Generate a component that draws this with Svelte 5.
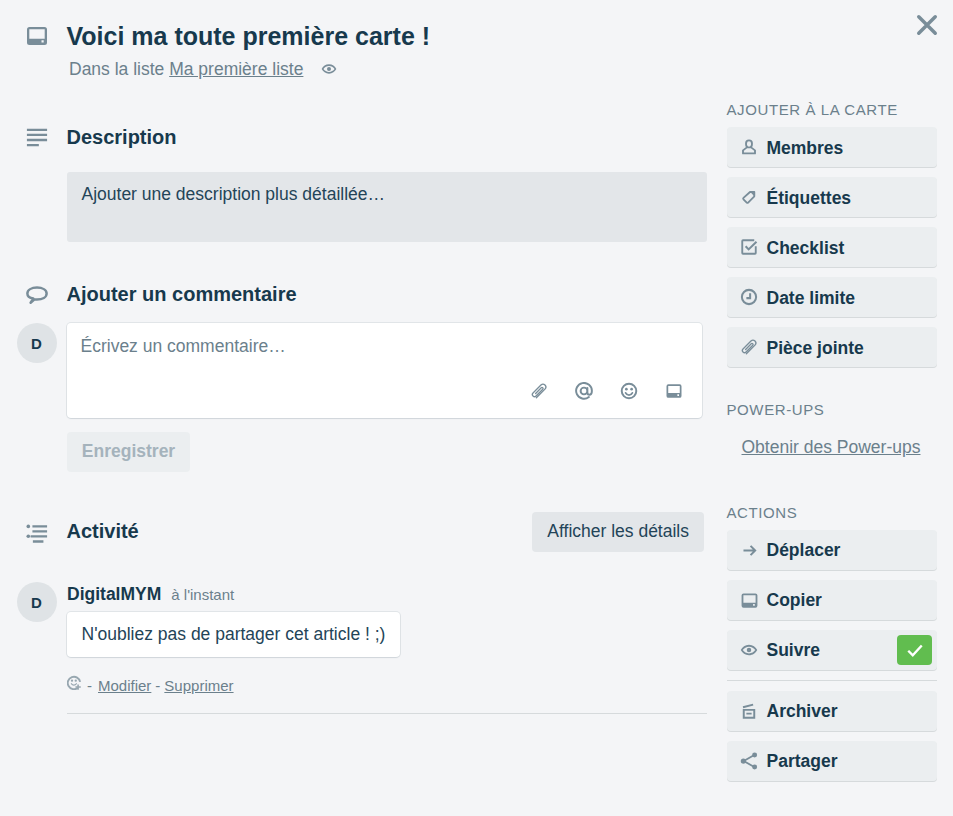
<script>
  const addItems = [
    { icon: 'person', label: 'Membres' },
    { icon: 'tag', label: 'Étiquettes', size: 16 },
    { icon: 'check', label: 'Checklist' },
    { icon: 'clock', label: 'Date limite' },
    { icon: 'clip', label: 'Pièce jointe' }
  ];
  const actionsA = [
    { icon: 'arrow', label: 'Déplacer', size: 17 },
    { icon: 'card', label: 'Copier', size: 19 },
    { icon: 'eye', label: 'Suivre', on: true }
  ];
  const actionsB = [
    { icon: 'archive', label: 'Archiver' },
    { icon: 'share', label: 'Partager' }
  ];
</script>

{#snippet icon(name, s = 18)}
  <svg class="ic" width={s} height={s} viewBox="0 0 24 24" aria-hidden="true">
    {#if name === 'card'}
      <path fill-rule="evenodd" d="M4.500 3h15A2.500 2.500 0 0 1 22 5.500v13a2.500 2.500 0 0 1-2.500 2.500h-15A2.500 2.500 0 0 1 2 18.500v-13A2.500 2.500 0 0 1 4.500 3zM4.300 5.300v9.500h15.400V5.300H4.300zM16.500 16.300v2.200h2.200v-2.200h-2.200z"/>
    {:else if name === 'desc'}
      <path d="M1 3h22v2.500H1zM1 8.500h22V11H1zM1 14h22v2.500H1zM1 19.500h13V22H1z"/>
    {:else if name === 'bubble'}
      <path fill="none" stroke-width="2.700" stroke-linejoin="round" d="M8 17C4 16.500 1.500 14.500 1.500 11.500 1.500 7.500 6 5 12 5s10.500 2.500 10.500 6.500S18 18 12 18c-1 0-2 0-3 0L5 21.500z"/>
    {:else if name === 'activity'}
      <path d="M7 3.500h16V6H7zM7 9h16v2.500H7zM5 14.500h18V17H5zM7.500 20H19v2.500H7.500z"/>
      <circle cx="2.500" cy="4.800" r="2"/><circle cx="2.500" cy="15.500" r="2"/>
    {:else if name === 'eye'}
      <path fill-rule="evenodd" d="M12 5c5 0 9 3 11 7-2 4-6 7-11 7S3 16 1 12c2-4 6-7 11-7zm0 2.500c-3.500 0-6.500 2-8.300 4.500 1.800 2.500 4.800 4.500 8.300 4.500s6.500-2 8.300-4.500C18.500 9.500 15.500 7.500 12 7.500zm0 1.500a3 3 0 1 1 0 6 3 3 0 0 1 0-6z"/>
    {:else if name === 'person'}
      <path fill="none" stroke-width="2.500" stroke-linejoin="round" d="M12 3.200c2.400 0 4 1.800 4 4.300 0 2.800-1.700 5-4 5s-4-2.200-4-5c0-2.500 1.600-4.300 4-4.300zM9.200 12.500L4 16.500v4h16v-4l-5.200-4"/>
    {:else if name === 'tag'}
      <path fill="none" stroke-width="2.700" stroke-linejoin="round" d="M13.500 4.500H20V11l-9.300 9.300a1.500 1.500 0 0 1-2.100 0l-4.900-4.900a1.500 1.500 0 0 1 0-2.100z"/>
      <path d="M14 4.500h6V11z"/>
    {:else if name === 'check'}
      <path fill="none" stroke-width="2.500" d="M21 11v9a1 1 0 0 1-1 1H4a1 1 0 0 1-1-1V4a1 1 0 0 1 1-1h15"/>
      <path fill="none" stroke-width="2.700" d="M7.500 11l4 4.200L22 5"/>
    {:else if name === 'clock'}
      <path fill="none" stroke-width="2.700" d="M12 2.500a9.500 9.500 0 1 1 0 19 9.500 9.500 0 0 1 0-19zM13.500 7v6.500H8.500"/>
    {:else if name === 'clip'}
      <path fill="none" stroke-width="1.700" stroke-linecap="round" d="M8.500 21L20 9.500a3.800 3.800 0 0 0-5.400-5.400L4 14.700a2.800 2.800 0 0 0 4 4L17 9.700a1.400 1.400 0 0 0-2-2L7.500 15.300"/>
    {:else if name === 'at'}
      <path fill="none" stroke-width="2.600" stroke-linecap="round" d="M16.500 12a4.500 4.500 0 1 1-9 0 4.500 4.500 0 0 1 9 0zm0-4v6c0 2 1.300 3 2.800 3 1.800 0 3.200-2 3.200-5a10.500 10.500 0 1 0-4 8"/>
    {:else if name === 'smile'}
      <circle cx="12" cy="12" r="9.700" fill="none" stroke-width="2.600"/>
      <circle cx="8.500" cy="9.500" r="1.800"/><circle cx="15.500" cy="9.500" r="1.800"/>
      <path fill="none" stroke-width="2.400" stroke-linecap="round" d="M7.500 14.500c1 2 2.500 3 4.500 3s3.500-1 4.500-3"/>
    {:else if name === 'arrow'}
      <path fill="none" stroke-width="2.800" d="M3.500 12h16.500M13.500 5.500L20 12l-6.500 6.500"/>
    {:else if name === 'archive'}
      <path fill="none" stroke-width="2.600" d="M5 10.500h14V21H5zM8.500 15.500h7M4 7L17.500 3.500"/>
    {:else if name === 'share'}
      <path fill="none" stroke-width="2.400" d="M5 12l14-8M5 12l14 8"/>
      <circle cx="4.500" cy="12" r="3.500"/><circle cx="19.500" cy="4" r="3.300"/><circle cx="19.500" cy="20" r="3.300"/>
    {:else if name === 'close'}
      <path fill="none" stroke-width="3.800" stroke-linecap="round" d="M3 3l18 18M21 3L3 21"/>
    {:else if name === 'react'}
      <path fill="none" stroke-width="3" d="M17.500 20.500A10 10 0 1 1 21 11"/>
      <circle cx="8" cy="9" r="1.800"/><circle cx="14" cy="9" r="1.800"/>
      <path fill="none" stroke-width="2" stroke-linecap="round" d="M7 14c1 1.500 2.300 2.200 4 2.200s3-.7 4-2.200"/>
      <path d="M19 15v3h3v2.500h-3v3h-2.500v-3h-3V18h3v-3z"/>
    {/if}
  </svg>
{/snippet}

{#snippet sideBtn(item, low)}
  <button class="side-btn" class:low type="button">
    <span class="side-ic">{@render icon(item.icon, item.size ?? 18)}</span>
    <span>{item.label}</span>
    {#if item.on}
      <span class="badge">
        <svg width="18" height="18" viewBox="0 0 24 24" aria-hidden="true"><path fill="none" stroke="#fff" stroke-width="3.200" d="M3 13l6 6L21 6"/></svg>
      </span>
    {/if}
  </button>
{/snippet}

<div class="modal">
  <button class="close" type="button" aria-label="Fermer">{@render icon('close', 22)}</button>

  <main class="main">
    <header class="row head">
      <span class="gut gut-card">{@render icon('card', 24)}</span>
      <div>
        <h1>Voici ma toute première carte !</h1>
        <p class="sub">Dans la liste <a href="#l">Ma première liste</a><span class="sub-eye">{@render icon('eye', 16)}</span></p>
      </div>
    </header>

    <section class="row sec-desc">
      <span class="gut">{@render icon('desc', 22)}</span>
      <h2>Description</h2>
    </section>
    <div class="desc-box">Ajouter une description plus détaillée…</div>

    <section class="row sec-comment">
      <span class="gut">{@render icon('bubble', 22)}</span>
      <h2>Ajouter un commentaire</h2>
    </section>
    <div class="row comment-row">
      <span class="avatar">D</span>
      <div class="comment-box">
        <div class="placeholder">Écrivez un commentaire…</div>
        <div class="tools">
          {@render icon('clip', 18)}
          {@render icon('at', 18)}
          {@render icon('smile', 18)}
          {@render icon('card', 18)}
        </div>
      </div>
    </div>
    <button class="save" type="button">Enregistrer</button>

    <section class="row sec-activity">
      <span class="gut">{@render icon('activity', 22)}</span>
      <div class="activity-head">
        <h2>Activité</h2>
        <button class="details" type="button">Afficher les détails</button>
      </div>
    </section>

    <div class="row entry">
      <span class="avatar">D</span>
      <div>
        <div class="meta"><strong>DigitalMYM</strong><span>à l'instant</span></div>
        <div class="bubble">N'oubliez pas de partager cet article ! ;)</div>
        <div class="links">
          <span class="react">{@render icon('react', 15)}</span>
          <span class="dash">-</span><a href="#m">Modifier</a><span class="dash2">-</span><a href="#s">Supprimer</a>
        </div>
        <div class="rule"></div>
      </div>
    </div>
  </main>

  <aside class="side">
    <h3 class="first">Ajouter à la carte</h3>
    {#each addItems as item}{@render sideBtn(item, true)}{/each}
    <h3 class="pu">Power-Ups</h3>
    <a class="get" href="#p">Obtenir des Power-ups</a>
    <h3 class="act">Actions</h3>
    {#each actionsA as item}{@render sideBtn(item, false)}{/each}
    <div class="side-rule"></div>
    {#each actionsB as item}{@render sideBtn(item, false)}{/each}
  </aside>
</div>

<style>
  :global(body) { margin: 0; background: #f4f5f7; }
  .modal {
    position: relative;
    display: flex;
    width: 953px;
    height: 816px;
    overflow: hidden;
    background: #f4f5f7;
    color: #17394d;
    font: 17.5px/25px "Liberation Sans", Arial, sans-serif;
  }
  .main { flex: none; width: 727px; }
  .side { flex: none; width: 210px; }
  .ic { display: block; fill: #798d99; stroke: #798d99; stroke-width: 0; }

  .close {
    position: absolute;
    top: 14px;
    right: 15.500px;
    padding: 0;
    border: 0;
    background: none;
  }

  .row { display: grid; grid-template-columns: 67px 1fr; }
  .gut { padding: 1px 0 0 25.800px; display: block; }
  h1, h2, h3, p { margin: 0; }

  .head { padding-top: 21px; }
  .head .gut-card { padding: 3px 0 0 24.700px; }
  h1 { margin-left: -0.500px; font-size: 25px; line-height: 30px; font-weight: 700; }
  .sub { margin-top: 6px; padding-left: 2px; line-height: 24px; color: #6b808c; display: flex; align-items: center; white-space: pre; }
  a { color: #6b808c; text-decoration: underline; }
  .sub-eye { margin-left: 17.500px; }

  h2 { margin-left: -0.500px; font-size: 20px; line-height: 24px; font-weight: 700; }
  .sec-desc { margin-top: 44px; }
  .desc-box {
    margin: 23px 0 0 67px;
    width: 640px;
    height: 70px;
    box-sizing: border-box;
    padding: 10px 14.500px;
    border-radius: 3px;
    background: #e3e6e9;
    color: #234458;
  }

  .sec-comment { margin-top: 40px; }
  .comment-row { margin-top: 16px; }
  .avatar {
    display: flex;
    align-items: center;
    justify-content: center;
    width: 40px;
    height: 40px;
    box-sizing: border-box;
    margin: 1px 0 0 17px;
    padding-right: 1px;
    border-radius: 50%;
    background: #dfe3e6;
    font-size: 15px;
    font-weight: 700;
  }
  .comment-box {
    display: flex;
    flex-direction: column;
    justify-content: space-between;
    box-sizing: border-box;
    width: 635px;
    height: 95px;
    margin-top: 1px;
    padding: 11px 19px 18px 13.500px;
    border-radius: 4px;
    background: #fff;
    box-shadow: 0 1px 2px -1px rgba(9, 45, 66, 0.25), 0 0 0 1px rgba(9, 45, 66, 0.08);
  }
  .placeholder { color: #6b808c; }
  .tools { display: flex; justify-content: flex-end; gap: 27px; }
  .save {
    display: block;
    margin: 14px 0 0 67px;
    width: 123px;
    height: 40px;
    padding: 0 0 2px;
    border: 0;
    border-radius: 4px;
    background: #ebeef0;
    color: #a5b3bc;
    font: 700 17.5px "Liberation Sans", Arial, sans-serif;
  }

  .sec-activity { margin-top: 40px; align-items: center; }
  .activity-head { display: flex; align-items: center; justify-content: space-between; width: 637px; }
  .activity-head h2 { padding-bottom: 2px; }
  .details {
    height: 40px;
    padding: 0 15px 2px;
    border: 0;
    border-radius: 4px;
    background: #e3e6e9;
    color: #234458;
    font: 17.5px "Liberation Sans", Arial, sans-serif;
  }

  .entry { margin-top: 29px; }
  .meta { display: flex; align-items: baseline; gap: 10px; line-height: 22px; margin-top: 2px; }
  .meta span { font-size: 15px; color: #6b808c; }
  .bubble {
    margin-top: 6px;
    width: max-content;
    height: 45px;
    box-sizing: border-box;
    padding: 10px 14.500px;
    border-radius: 4px;
    background: #fff;
    color: #234458;
    box-shadow: 0 1px 2px -1px rgba(9, 45, 66, 0.25), 0 0 0 1px rgba(9, 45, 66, 0.08);
  }
  .links { display: flex; align-items: center; margin-top: 16px; height: 24px; font-size: 15px; color: #6b808c; }
  .react { opacity: 0.75; margin-bottom: 5px; }
  .dash { margin: 0 6px 0 5px; }
  .dash2 { margin: 0 4px; }
  .rule { margin-top: 16px; width: 640px; height: 1px; background: #d6dadc; }

  h3 { margin-left: -0.500px; font-size: 15px; line-height: 20px; font-weight: 400; letter-spacing: 0.6px; text-transform: uppercase; color: #6b808c; }
  .first { margin-top: 100px; margin-bottom: 7px; }
  .pu { margin-top: 33px; }
  .get { display: block; margin-top: 7px; padding-left: 14.500px; line-height: 40px; white-space: nowrap; }
  .act { margin-top: 36px; margin-bottom: 7px; }

  .side-btn {
    display: flex;
    align-items: center;
    gap: 7.500px;
    width: 210px;
    height: 40px;
    margin: 0 0 10px;
    padding: 0 0 0 12px;
    border: 0;
    border-radius: 4px;
    background: #ebeef0;
    box-shadow: 0 1px 0 0 #d6dadc;
    color: #17394d;
    font: 700 17.5px "Liberation Sans", Arial, sans-serif;
    text-align: left;
  }
  .side-btn.low { padding-top: 2px; }
  .side-ic { display: flex; align-items: center; justify-content: center; width: 20px; height: 20px; }
  .low .side-ic { margin-top: -2px; }
  .badge {
    display: flex;
    align-items: center;
    justify-content: center;
    width: 35px;
    height: 30px;
    margin-left: auto;
    margin-right: 5px;
    border-radius: 4px;
    background: #61bd4f;
  }
  .side-rule { height: 1px; margin-bottom: 10px; background: #d6dadc; }
</style>
